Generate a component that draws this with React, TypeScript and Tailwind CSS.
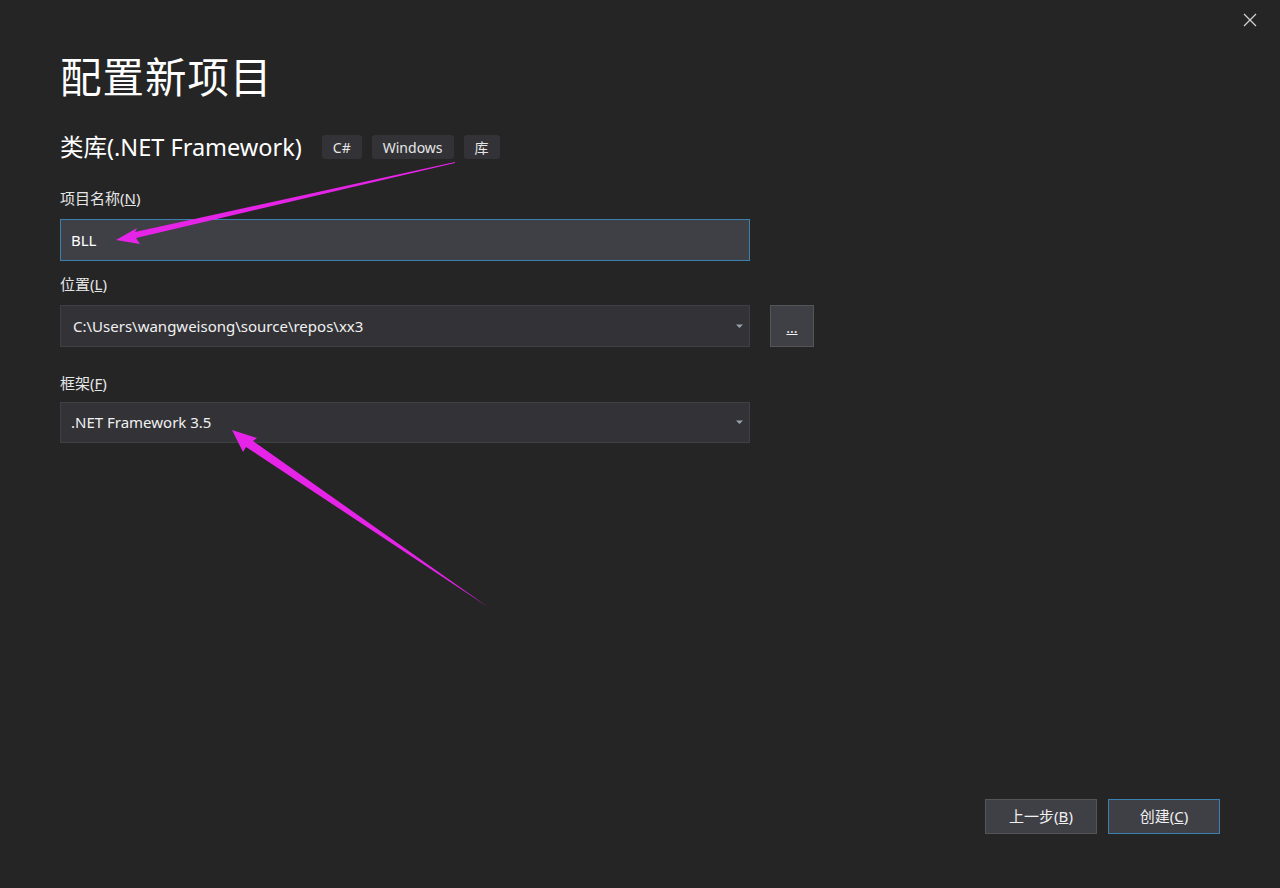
import React from "react";

const font = { fontFamily: '"Noto Sans", "Noto Sans CJK SC", sans-serif' };

const Caret = () => (
  <svg width="8" height="5" viewBox="0 0 8 5" className="text-gray-400">
    <path d="M0 0.5h7L3.5 4z" fill="currentColor" />
  </svg>
);

const Tag: React.FC<{ children: React.ReactNode }> = ({ children }) => (
  <span className="flex h-[24px] items-center rounded-[3px] bg-[#333337] px-[11px] text-[14px] text-[#e6e6e6]">
    {children}
  </span>
);

const Label: React.FC<{ text: string; k: string }> = ({ text, k }) => (
  <div className="text-[15px] leading-[20px] text-[#e6e6e6]">
    {text}(<span className="underline">{k}</span>)
  </div>
);

export default function App() {
  return (
    <div
      className="relative h-[888px] w-[1280px] overflow-hidden bg-[#252526] text-[#f1f1f1]"
      style={font}
    >
      <button className="absolute right-[23px] top-[13px] text-[#d0d0d0]">
        <svg width="14" height="14" viewBox="0 0 14 14">
          <path d="M1 1l12 12M13 1L1 13" stroke="currentColor" strokeWidth="1.3" />
        </svg>
      </button>

      <div className="flex flex-col px-[60px] pt-[48px]">
        <h1 className="text-[41.5px] font-normal leading-[58px] tracking-[1px] text-white">配置新项目</h1>

        <div className="mt-[25px] flex items-center">
          <span className="text-[23.5px] leading-[32px] text-white">类库(.NET Framework)</span>
          <div className="ml-[20px] flex gap-[10px]">
            <Tag>C#</Tag>
            <Tag>Windows</Tag>
            <Tag>库</Tag>
          </div>
        </div>

        <div className="mt-[25px]">
          <Label text="项目名称" k="N" />
          <div className="mt-[11px] flex h-[42px] w-[690px] items-center border border-[#3c7fb1] bg-[#3f3f46] px-[10px] text-[15px] text-white">
            BLL
          </div>
        </div>

        <div className="mt-[13px]">
          <Label text="位置" k="L" />
          <div className="mt-[11px] flex items-center gap-[20px]">
            <div className="flex h-[42px] w-[690px] items-center justify-between border border-[#3f3f46] bg-[#333337] pl-[12px] pr-[5px] text-[15px] text-[#f1f1f1]">
              <span>C:\Users\wangweisong\source\repos\xx3</span>
              <Caret />
            </div>
            <button className="flex h-[42px] w-[44px] items-end justify-center border border-[#555558] bg-[#3f3f46] pb-[11px] text-[14px] leading-[14px] text-[#f1f1f1]">
              <span className="underline">...</span>
            </button>
          </div>
        </div>

        <div className="mt-[26px]">
          <Label text="框架" k="F" />
          <div className="mt-[9px] flex h-[41px] w-[690px] items-center justify-between border border-[#3f3f46] bg-[#333337] pl-[10px] pr-[5px] text-[15px] text-[#f1f1f1]">
            <span>.NET Framework 3.5</span>
            <Caret />
          </div>
        </div>
      </div>

      <div className="absolute bottom-[54px] right-[60px] flex gap-[11px]">
        <button className="h-[35px] w-[112px] border border-[#555558] bg-[#3f3f46] text-[15px] text-[#f1f1f1]">
          上一步(<span className="underline">B</span>)
        </button>
        <button className="h-[35px] w-[112px] border border-[#3c7fb1] bg-[#3f3f46] text-[15px] text-[#f1f1f1]">
          创建(<span className="underline">C</span>)
        </button>
      </div>

      <svg className="pointer-events-none absolute left-0 top-0" width="1280" height="888">
        <polygon points="455,162 135,232 137,228 116,240 140,244 136,238 455,163" fill="#e624e8" />
        <polygon points="488,607 253,441 257,438 232,430 243,452 246,447 488,607" fill="#e624e8" />
      </svg>
    </div>
  );
}
